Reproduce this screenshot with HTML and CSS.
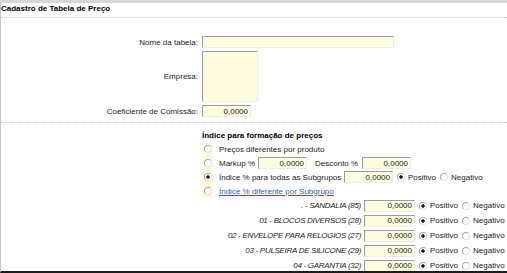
FILE: index.html
```html
<!DOCTYPE html>
<html lang="pt-BR">
<head>
    <meta charset="UTF-8">
    <title>Cadastro de Tabela de Preço</title>
    <link rel="stylesheet" href="styles.css">
</head>
<body>
    <div class="page">
        <!-- Titulo -->
        <div class="panel-title">Cadastro de Tabela de Preço</div>

        <!-- Dados basicos -->
        <div class="section-basic">
            <div class="field">
                <label class="field-label">Nome da tabela:</label>
                <input class="txt txt-name" type="text">
            </div>
            <div class="field">
                <label class="field-label">Empresa:</label>
                <textarea class="txt txt-company"></textarea>
            </div>
            <div class="field">
                <label class="field-label">Coeficiente de Comissão:</label>
                <input class="txt txt-num" type="text" value="0,0000">
            </div>
        </div>

        <!-- Indice de precos -->
        <div class="section-pricing">
            <div class="pricing-title">Índice para formação de preços</div>
            <div class="options">
                <div class="option">
                    <span class="radio-cell"><input class="rb" type="radio" name="modo"></span>
                    <span class="option-text">Preços diferentes por produto</span>
                </div>
                <div class="option">
                    <span class="radio-cell"><input class="rb" type="radio" name="modo"></span>
                    <span class="option-text lbl-markup">Markup %</span>
                    <input class="txt txt-num" type="text" value="0,0000">
                    <span class="lbl-desconto">Desconto %</span>
                    <input class="txt txt-num" type="text" value="0,0000">
                </div>
                <div class="option">
                    <span class="radio-cell"><input class="rb" type="radio" name="modo" checked></span>
                    <span class="option-text lbl-todas">Índice % para todas as Subgrupos</span>
                    <input class="txt txt-num" type="text" value="0,0000">
                    <label class="choice"><input class="rb" type="radio" name="sinal-geral" checked>Positivo</label>
                    <label class="choice"><input class="rb" type="radio" name="sinal-geral">Negativo</label>
                </div>
                <div class="option">
                    <span class="radio-cell"><input class="rb" type="radio" name="modo"></span>
                    <a class="option-text option-link" href="#">Índice % diferente por Subgrupo</a>
                </div>
            </div>

            <div class="subgroups" id="subgroups">
                <!-- linhas geradas pelo script -->
            </div>
        </div>
    </div>

    <script>
        // Subgrupos
        const subgrupos = [
            { nome: ". - SANDALIA", codigo: 85 },
            { nome: "01 - BLOCOS DIVERSOS", codigo: 28 },
            { nome: "02 - ENVELOPE PARA RELOGIOS", codigo: 27 },
            { nome: "03 - PULSEIRA DE SILICONE", codigo: 29 },
            { nome: "04 - GARANTIA", codigo: 32 }
        ];

        const lista = document.getElementById('subgroups');
        subgrupos.forEach((sub, i) => {
            const row = document.createElement('div');
            row.classList.add('subgroup');
            row.innerHTML = `
                <span class="subgroup-label">${sub.nome} (${sub.codigo})</span>
                <input class="txt txt-num txt-sub" type="text" value="0,0000">
                <label class="choice"><input class="rb" type="radio" name="sinal-${i}" checked>Positivo</label>
                <label class="choice"><input class="rb" type="radio" name="sinal-${i}">Negativo</label>
            `;
            lista.appendChild(row);
        });
    </script>
</body>
</html>
```

FILE: styles.css
```css
/* Reset */
* {
    margin: 0;
    padding: 0;
    box-sizing: border-box;
}

body {
    font-family: "Liberation Sans", Arial, sans-serif;
    font-size: 8px;
    color: #222;
    background: #fff;
}

.page {
    height: 273px;
    border-top: 3px solid #d6d6d6;
    border-left: 1px solid #c4c4c4;
    border-bottom: 2px solid #1c1c1c;
    overflow: hidden;
}

/* Titulo */
.panel-title {
    font-weight: bold;
    color: #000;
    line-height: 12px;
    padding-bottom: 2px;
    border-bottom: 1px dotted #c2c2c2;
}

/* Dados basicos */
.section-basic {
    display: grid;
    row-gap: 3px;
    padding: 18px 0 5px;
    border-bottom: 1px dotted #c2c2c2;
}

.field {
    display: grid;
    grid-template-columns: 197px auto;
    column-gap: 4px;
    align-items: center;
}

.field-label {
    text-align: right;
}

.txt {
    height: 12px;
    border: 1px solid;
    border-color: #9c9c9c #ececec #ececec #9c9c9c;
    background: #fffde0;
    font: inherit;
    color: #222;
    padding: 0 2px;
    outline: none;
}

.txt-name {
    width: 192px;
}

.txt-company {
    width: 56px;
    height: 51px;
    resize: none;
}

.txt-num {
    width: 49px;
    text-align: right;
}

/* Indice de precos */
.section-pricing {
    padding-top: 7px;
}

.pricing-title {
    margin-left: 201px;
    font-weight: bold;
    color: #000;
    line-height: 12px;
}

.options {
    margin-left: 201px;
}

.option {
    display: flex;
    align-items: center;
    height: 14px;
}

.radio-cell {
    width: 11px;
    align-self: stretch;
    background: #fffbdc;
    display: flex;
    align-items: center;
    justify-content: center;
}

.option-text {
    margin-left: 6px;
}

.lbl-markup {
    width: 39px;
}

.lbl-desconto {
    width: 47px;
    margin-left: 8px;
}

.lbl-todas {
    width: 125px;
}

.option-link {
    color: #1f5fc8;
    text-decoration: underline;
}

/* Radio classico */
.rb {
    appearance: none;
    width: 8px;
    height: 8px;
    border: 1px solid;
    border-color: #a8a8a8 #e2e2e2 #e2e2e2 #a8a8a8;
    border-radius: 50%;
    background: #fff;
    flex-shrink: 0;
}

.rb:checked {
    background: radial-gradient(circle, #1a1a1a 0 1.4px, #fff 2px);
}

.choice {
    display: inline-flex;
    align-items: center;
    margin-left: 4px;
}

.choice .rb {
    margin-right: 3px;
}

.choice + .choice {
    margin-left: 4px;
}

/* Subgrupos */
.subgroup {
    display: flex;
    align-items: center;
    height: 15px;
}

.subgroup-label {
    width: 360px;
    margin-right: 3px;
    text-align: right;
    font-style: italic;
    letter-spacing: -0.3px;
}

.txt-sub {
    width: 51px;
}
```
